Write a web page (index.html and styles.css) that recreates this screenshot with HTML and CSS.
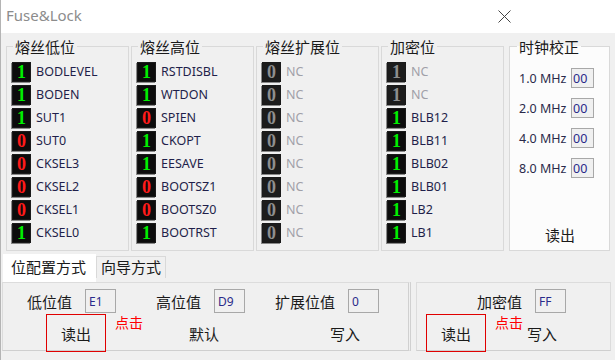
FILE: index.html
```html
<!DOCTYPE html>
<html lang="zh-CN">
<head>
  <meta charset="UTF-8">
  <title>Fuse&amp;Lock</title>
  <link rel="stylesheet" href="styles.css">
</head>
<body>
<div class="window">
  <div class="titlebar">
    <span class="title">Fuse&amp;Lock</span>
    <svg class="close" width="13" height="13" viewBox="0 0 13 13"><path d="M0.5 0.5L12.5 12.5M12.5 0.5L0.5 12.5" stroke="#444" stroke-width="1"/></svg>
  </div>

  <div class="main">
    <fieldset class="group">
      <legend>熔丝低位</legend>
      <div class="bit"><span class="led on">1</span><span class="name">BODLEVEL</span></div>
      <div class="bit"><span class="led on">1</span><span class="name">BODEN</span></div>
      <div class="bit"><span class="led on">1</span><span class="name">SUT1</span></div>
      <div class="bit"><span class="led off">0</span><span class="name">SUT0</span></div>
      <div class="bit"><span class="led off">0</span><span class="name">CKSEL3</span></div>
      <div class="bit"><span class="led off">0</span><span class="name">CKSEL2</span></div>
      <div class="bit"><span class="led off">0</span><span class="name">CKSEL1</span></div>
      <div class="bit"><span class="led on">1</span><span class="name">CKSEL0</span></div>
    </fieldset>
    <fieldset class="group">
      <legend>熔丝高位</legend>
      <div class="bit"><span class="led on">1</span><span class="name">RSTDISBL</span></div>
      <div class="bit"><span class="led on">1</span><span class="name">WTDON</span></div>
      <div class="bit"><span class="led off">0</span><span class="name">SPIEN</span></div>
      <div class="bit"><span class="led on">1</span><span class="name">CKOPT</span></div>
      <div class="bit"><span class="led on">1</span><span class="name">EESAVE</span></div>
      <div class="bit"><span class="led off">0</span><span class="name">BOOTSZ1</span></div>
      <div class="bit"><span class="led off">0</span><span class="name">BOOTSZ0</span></div>
      <div class="bit"><span class="led on">1</span><span class="name">BOOTRST</span></div>
    </fieldset>
    <fieldset class="group">
      <legend>熔丝扩展位</legend>
      <div class="bit"><span class="led nc">0</span><span class="name dim">NC</span></div>
      <div class="bit"><span class="led nc">0</span><span class="name dim">NC</span></div>
      <div class="bit"><span class="led nc">0</span><span class="name dim">NC</span></div>
      <div class="bit"><span class="led nc">0</span><span class="name dim">NC</span></div>
      <div class="bit"><span class="led nc">0</span><span class="name dim">NC</span></div>
      <div class="bit"><span class="led nc">0</span><span class="name dim">NC</span></div>
      <div class="bit"><span class="led nc">0</span><span class="name dim">NC</span></div>
      <div class="bit"><span class="led nc">0</span><span class="name dim">NC</span></div>
    </fieldset>
    <fieldset class="group">
      <legend>加密位</legend>
      <div class="bit"><span class="led nc">1</span><span class="name dim">NC</span></div>
      <div class="bit"><span class="led nc">1</span><span class="name dim">NC</span></div>
      <div class="bit"><span class="led on">1</span><span class="name">BLB12</span></div>
      <div class="bit"><span class="led on">1</span><span class="name">BLB11</span></div>
      <div class="bit"><span class="led on">1</span><span class="name">BLB02</span></div>
      <div class="bit"><span class="led on">1</span><span class="name">BLB01</span></div>
      <div class="bit"><span class="led on">1</span><span class="name">LB2</span></div>
      <div class="bit"><span class="led on">1</span><span class="name">LB1</span></div>
    </fieldset>
    <fieldset class="group clock">
      <legend>时钟校正</legend>
      <div class="clock-body">
        <div class="freq"><span>1.0 MHz</span><input class="box small" value="00" readonly></div>
        <div class="freq"><span>2.0 MHz</span><input class="box small" value="00" readonly></div>
        <div class="freq"><span>4.0 MHz</span><input class="box small" value="00" readonly></div>
        <div class="freq"><span>8.0 MHz</span><input class="box small" value="00" readonly></div>
        <button class="flat clock-read">读出</button>
      </div>
    </fieldset>
  </div>

  <div class="tabs">
    <div class="tab active">位配置方式</div>
    <div class="tab">向导方式</div>
  </div>

  <div class="tab-body">
    <div class="panel fuse-panel">
      <div class="row values">
        <label class="lbl lbl-low">低位值</label><input class="box" value="E1" readonly>
        <label class="lbl lbl-high">高位值</label><input class="box" value="D9" readonly>
        <label class="lbl lbl-ext">扩展位值</label><input class="box" value="0" readonly>
      </div>
      <div class="row actions">
        <button class="flat marked btn-read">读出</button>
        <span class="hint">点击</span>
        <button class="flat btn-default">默认</button>
        <button class="flat btn-write">写入</button>
      </div>
    </div>
    <div class="panel lock-panel">
      <div class="row values">
        <label class="lbl lbl-lock">加密值</label><input class="box" value="FF" readonly>
      </div>
      <div class="row actions">
        <button class="flat marked btn-read2">读出</button>
        <span class="hint">点击</span>
        <button class="flat btn-write2">写入</button>
      </div>
    </div>
  </div>
</div>
</body>
</html>
```

FILE: styles.css
```css
* {
  box-sizing: border-box;
}
body {
  margin: 0;
  width: 615px;
  height: 360px;
  overflow: hidden;
  background: #f0f0f0;
  font-family: 'Noto Sans', 'Noto Sans CJK SC', sans-serif;
}
.window {
  height: 360px;
  border-left: 1px solid #b4b4b4;
}
.titlebar {
  height: 33px;
  background: #fff;
  display: flex;
  align-items: center;
  padding: 0 104px 3px 5px;
}
.title {
  font-size: 15px;
  color: #8c8c8c;
}
.close {
  margin-left: auto;
  margin-top: 3px;
}
.main {
  display: flex;
  padding: 5px 0 0 5px;
}
.group {
  margin: 0 2px 0 0;
  width: 123px;
  height: 213px;
  padding: 5px 0 0 5px;
  border: 1px solid #d9d9d9;
  min-width: 0;
}
legend {
  font-family: 'Noto Sans CJK SC', sans-serif;
  font-size: 15px;
  line-height: 17px;
  color: #1a1a1a;
  padding: 0 2px;
  margin-left: 1px;
}
.bit {
  display: flex;
  align-items: center;
  height: 23px;
}
.led {
  width: 19px;
  height: 20px;
  background: #0c0c0c;
  border: 1px solid #1a1a1a;
  box-shadow: -1px 1px 0 #8a8a8a;
  font-family: 'Liberation Serif', serif;
  font-weight: bold;
  font-size: 18px;
  line-height: 18px;
  text-align: center;
}
.led.on {
  color: #00f000;
}
.led.off {
  color: #ff1a1a;
}
.led.nc {
  background: #1c1c1c;
  color: #8e8e8e;
}
.name {
  margin-left: 5px;
  font-size: 12.5px;
  color: #1f1f4a;
}
.name.dim {
  color: #a0a0a8;
}
.clock {
  margin-left: 3px;
  width: 101px;
  background: #fcfcfc;
  padding: 13px 0 0 0;
}
.clock legend {
  margin-left: 7px;
}
.clock-body {
  display: flex;
  flex-direction: column;
  height: 181px;
  padding-left: 9px;
}
.freq {
  display: flex;
  align-items: center;
  height: 20px;
  margin-bottom: 10px;
  font-size: 12.5px;
  color: #2a2a4a;
}
.freq span {
  width: 52px;
}
.box {
  width: 31px;
  height: 24px;
  border: 1px solid #a8a8a8;
  background: #f0f0f0;
  font-family: 'Noto Sans', sans-serif;
  font-size: 12px;
  color: #2a2a8a;
  padding: 0 0 0 3px;
  outline: none;
}
.box.small {
  width: 23px;
  height: 20px;
  padding: 0 0 0 1px;
  font-size: 12.5px;
}
.flat {
  background: none;
  border: none;
  font-family: 'Noto Sans CJK SC', sans-serif;
  font-size: 15px;
  color: #1a1a1a;
  padding: 0;
}
.clock-read {
  margin-top: auto;
  margin-bottom: 4px;
  align-self: center;
  margin-left: -8px;
}
.tabs {
  display: flex;
  align-items: flex-start;
  padding: 3px 0 0 2px;
  height: 31px;
  font-family: 'Noto Sans CJK SC', sans-serif;
  font-size: 15px;
  color: #1a1a1a;
}
.tab {
  height: 22px;
  margin-top: 2px;
  padding: 0 4px;
  line-height: 20px;
  border: 1px solid #d9d9d9;
  border-bottom: none;
}
.tab.active {
  height: 28px;
  margin-top: 0;
  width: 93px;
  padding: 0 8px;
  line-height: 26px;
  background: #fff;
  border: none;
}
.tab-body {
  display: flex;
  padding-left: 1px;
}
.panel {
  height: 69px;
  border: 1px solid #dcdcdc;
  border-bottom-color: #cfcfcf;
}
.fuse-panel {
  width: 409px;
  border-right: 3px double #d0d0d0;
}
.lock-panel {
  width: 195px;
  margin-left: 5px;
}
.row {
  display: flex;
  align-items: center;
}
.values {
  height: 30px;
  padding-top: 6px;
}
.lbl {
  font-family: 'Noto Sans CJK SC', sans-serif;
  font-size: 15px;
  color: #1a1a1a;
  margin-right: 13px;
}
.lbl-low {
  margin-left: 24px;
}
.lbl-high {
  margin-left: 40px;
}
.lbl-ext {
  margin-left: 30px;
}
.lbl-lock {
  margin-left: 60px;
}
.actions {
  height: 38px;
  margin-top: 1px;
  align-items: stretch;
}
.marked {
  width: 60px;
  border: 1px solid #e00000;
}
.btn-read {
  margin-left: 43px;
}
.btn-read2 {
  margin-left: 9px;
}
.hint {
  color: #ff0000;
  font-family: 'Noto Sans CJK SC', sans-serif;
  font-size: 14px;
  margin: -2px 0 0 9px;
}
.btn-default {
  margin-left: 46px;
}
.btn-write {
  margin-left: 111px;
}
.btn-write2 {
  margin-left: 4px;
}
```
